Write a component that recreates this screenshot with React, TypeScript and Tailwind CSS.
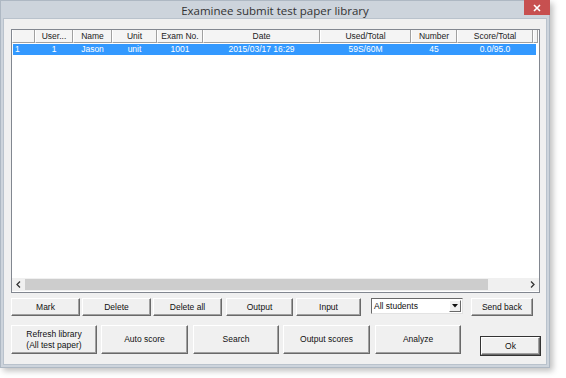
import React from "react";

const font = { fontFamily: '"Liberation Sans", Arial, sans-serif' };

const columns = [
    { label: "", width: "w-[23px]" },
    { label: "User...", width: "w-[38px]" },
    { label: "Name", width: "w-[39px]" },
    { label: "Unit", width: "w-[45px]" },
    { label: "Exam No.", width: "w-[46px]" },
    { label: "Date", width: "w-[117px]" },
    { label: "Used/Total", width: "w-[91px]" },
    { label: "Number", width: "w-[46px]" },
    { label: "Score/Total", width: "w-[76px]" },
];

const row = ["1", "1", "Jason", "unit", "1001", "2015/03/17 16:29", "59S/60M", "45", "0.0/95.0"];

function Btn({ className, children }: { className: string; children: React.ReactNode }) {
    return (
        <div
            className={
                "flex items-center justify-center text-center leading-[11px] text-[8.5px] text-[#111] bg-[#f0f0f0] border-t border-l border-t-white border-l-white border-b border-r border-b-[#696969] border-r-[#696969] shadow-[inset_-1px_-1px_0_#a0a0a0] " +
                className
            }
        >
            {children}
        </div>
    );
}

export default function App() {
    return (
        <div className="w-[566px] h-[378px] bg-white" style={font}>
            <div className="w-[550px] h-[368px] flex flex-col bg-[#cdd4dc] border border-[#aeb8c3] shadow-[3px_3px_6px_rgba(0,0,0,0.25)]">
                {/* title bar */}
                <div className="relative h-[17px] flex items-center justify-center">
                    <span className="text-[11.5px] text-[#333] mt-[3px]" style={{ fontFamily: '"Open Sans", sans-serif' }}>
                        Examinee submit test paper library
                    </span>
                    <div className="absolute right-[-1px] top-[-1px] w-[26px] h-[15px] bg-[#c75050] flex items-center justify-center">
                        <svg width="8" height="8" viewBox="0 0 8 8">
                            <path d="M1 1L7 7M7 1L1 7" stroke="white" strokeWidth="1.6" />
                        </svg>
                    </div>
                </div>

                {/* client */}
                <div className="flex-1 mx-[2px] mb-[2px] bg-[#f0f0f0] border border-[#b9c2cc] flex flex-col pl-[7px] pt-[10px]">
                    {/* list view */}
                    <div className="w-[529px] h-[264px] bg-white border border-[#828790] flex flex-col">
                        <div className="flex h-[13px] shrink-0">
                            {columns.map((c, i) => (
                                <div
                                    key={i}
                                    className={
                                        c.width +
                                        " shrink-0 flex items-center justify-center text-[8.5px] text-[#222] bg-[#f4f4f4] border-l border-l-white border-r border-r-[#a0a0a0] border-b border-b-[#a0a0a0]"
                                    }
                                >
                                    {c.label}
                                </div>
                            ))}
                            <div className="w-[5px] shrink-0 bg-[#f4f4f4] border-l border-l-white border-r border-r-[#a0a0a0] border-b border-b-[#a0a0a0]" />
                            <div className="flex-1" />
                        </div>
                        <div className="mt-[1px] ml-[1px] mr-[3px] h-[11px] bg-[#3399ff] flex text-[8.5px] text-white">
                            {row.map((v, i) => (
                                <div
                                    key={i}
                                    className={
                                        (i === 0 ? "w-[22px] pl-[2px] justify-start" : columns[i].width + " justify-center") +
                                        " shrink-0 flex items-center leading-none"
                                    }
                                >
                                    {v}
                                </div>
                            ))}
                        </div>
                        <div className="flex-1" />
                        {/* horizontal scrollbar */}
                        <div className="h-[13px] flex items-center bg-[#f0f0f0] mb-[1px]">
                            <div className="w-[13px] flex items-center justify-center">
                                <svg width="5" height="7" viewBox="0 0 5 7">
                                    <path d="M4 0.5L1 3.5L4 6.5" stroke="#333" strokeWidth="1.3" fill="none" />
                                </svg>
                            </div>
                            <div className="w-[463px] h-[11px] bg-[#cdcdcd]" />
                            <div className="flex-1" />
                            <div className="w-[13px] flex items-center justify-center">
                                <svg width="5" height="7" viewBox="0 0 5 7">
                                    <path d="M1 0.5L4 3.5L1 6.5" stroke="#333" strokeWidth="1.3" fill="none" />
                                </svg>
                            </div>
                        </div>
                    </div>

                    {/* button row 1 */}
                    <div className="flex items-start mt-[5px] h-[18px]">
                        <Btn className="w-[69px] h-[18px]">Mark</Btn>
                        <Btn className="w-[69px] h-[18px] ml-[2px]">Delete</Btn>
                        <Btn className="w-[69px] h-[18px] ml-[2px]">Delete all</Btn>
                        <Btn className="w-[67px] h-[18px] ml-[4px]">Output</Btn>
                        <Btn className="w-[65px] h-[18px] ml-[3px]">Input</Btn>
                        <div className="w-[92px] h-[16px] ml-[10px] bg-white border border-t-[#696969] border-l-[#696969] border-b-[#e3e3e3] border-r-[#e3e3e3] flex items-center">
                            <span className="flex-1 pl-[2px] text-[8.5px] text-[#111]">All students</span>
                            <div className="w-[12px] h-[12px] mr-[1px] bg-[#f0f0f0] border-t border-l border-white border-b border-r border-b-[#696969] border-r-[#696969] flex items-center justify-center">
                                <svg width="6" height="4" viewBox="0 0 6 4">
                                    <path d="M0 0H6L3 3.5Z" fill="#111" />
                                </svg>
                            </div>
                        </div>
                        <Btn className="w-[62px] h-[18px] ml-[8px]">Send back</Btn>
                    </div>

                    {/* button row 2 */}
                    <div className="flex items-start mt-[9px]">
                        <Btn className="w-[86px] h-[29px]">
                            Refresh library
                            <br />
                            (All test paper)
                        </Btn>
                        <Btn className="w-[87px] h-[29px] ml-[4px]">Auto score</Btn>
                        <Btn className="w-[86px] h-[29px] ml-[5px]">Search</Btn>
                        <Btn className="w-[87px] h-[29px] ml-[4px]">Output scores</Btn>
                        <Btn className="w-[86px] h-[29px] ml-[5px]">Analyze</Btn>
                        <Btn className="w-[59px] h-[18px] ml-[20px] mt-[12px] outline outline-1 outline-[#333]">Ok</Btn>
                    </div>
                </div>
            </div>
        </div>
    );
}
